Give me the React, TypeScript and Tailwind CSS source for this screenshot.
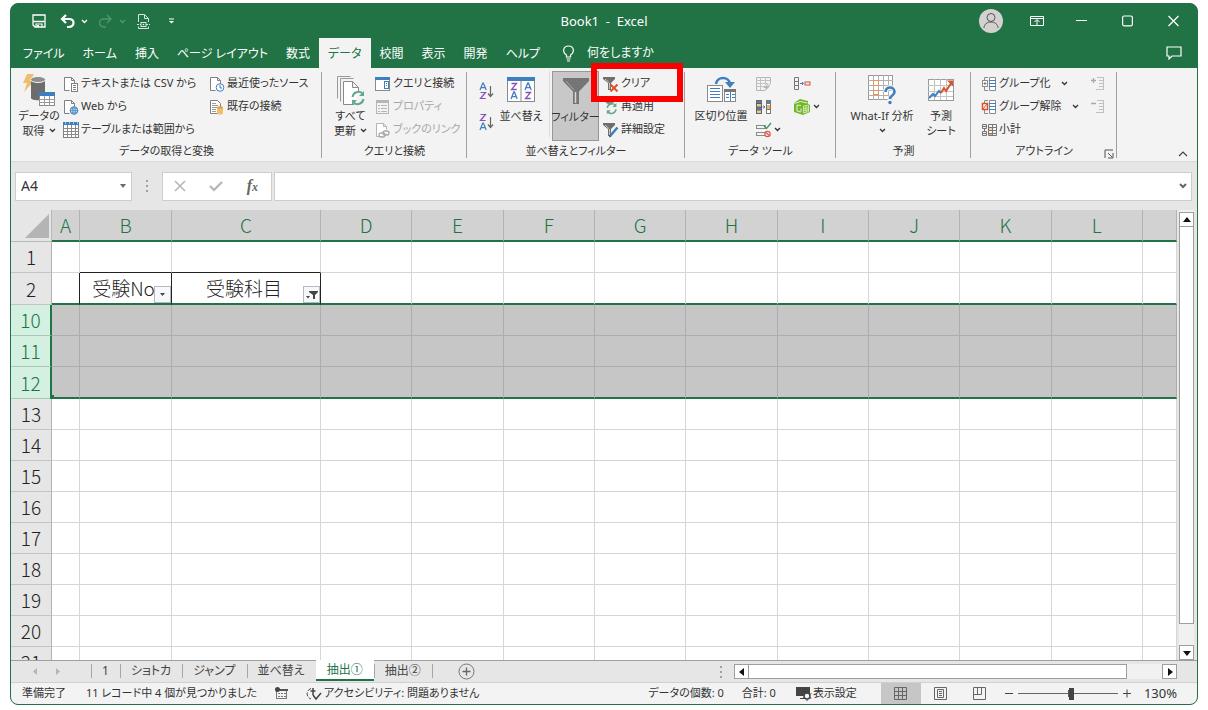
import type { ReactNode } from 'react';
import clsx from 'clsx';

const GREEN = '#217346';
const GRAY = '#6b6b6b';
const BLUE = '#3f7fbf';

const TABS = ['ファイル', 'ホーム', '挿入', 'ページ レイアウト', '数式', 'データ', '校閲', '表示', '開発', 'ヘルプ'];
const COLUMNS = ['A', 'B', 'C', 'D', 'E', 'F', 'G', 'H', 'I', 'J', 'K', 'L', ''];
const ROWS = [1, 2, 10, 11, 12, 13, 14, 15, 16, 17, 18, 19, 20, 21];
const SHEETS = ['1', 'ショトカ', 'ジャンプ', '並べ替え', '抽出①', '抽出②'];

interface SvgProps {
  w: number;
  h: number;
  children: ReactNode;
  className?: string;
}

function Svg({ w, h, children, className }: SvgProps) {
  return (
    <svg width={w} height={h} viewBox={`0 0 ${w} ${h}`} fill="none" className={clsx('shrink-0', className)} aria-hidden="true">
      {children}
    </svg>
  );
}

function Chevron({ color = '#333' }: { color?: string }) {
  return (
    <Svg w={7} h={5}>
      <path d="M1 1l2.500 2.500L6 1" stroke={color} strokeWidth="1.300" />
    </Svg>
  );
}

/* ---------- ribbon icons ---------- */

function DatabaseIcon() {
  return (
    <Svg w={34} h={34}>
      <path d="M5 1h7L8 8h4L2 19l3-9H1z" fill="#f0bd6a" />
      <path d="M9 6v19c0 3 14 3 14 0V6z" fill="#6d6d6d" />
      <ellipse cx="16" cy="6.500" rx="7.500" ry="3" fill="#8f8f8f" stroke="#f3f3f3" />
      <rect x="17.500" y="19.500" width="15" height="13" fill="#fff" stroke="#8a8a8a" />
      <rect x="17" y="19" width="16" height="4" fill={BLUE} />
      <path d="M22.500 23v10M27.500 23v10M17 26.500h16M17 29.500h16" stroke="#9a9a9a" />
    </Svg>
  );
}

function PageBase({ color = '#808080' }: { color?: string }) {
  return <path d="M6.500 14.500H1.500V1.500h7l3 3v3M8.500 1.500v3h3" fill="#fff" stroke={color} />;
}

function TextFileIcon() {
  return (
    <Svg w={16} h={16}>
      <PageBase />
      <rect x="8.500" y="7.500" width="6" height="8" fill="#fff" stroke="#808080" />
      <path d="M10 9.500h3M10 11.500h3M10 13.500h3" stroke="#808080" />
    </Svg>
  );
}

function WebFileIcon() {
  return (
    <Svg w={16} h={16}>
      <PageBase />
      <circle cx="11" cy="11.500" r="3.800" fill="#fff" stroke={BLUE} />
      <path d="M7 11.500h8M11 8v7M8 9.800h6M8 13.200h6" stroke={BLUE} strokeWidth=".7" />
      <ellipse cx="11" cy="11.500" rx="1.800" ry="3.800" stroke={BLUE} strokeWidth=".7" />
    </Svg>
  );
}

function TableIcon() {
  return (
    <Svg w={16} h={16}>
      <rect x=".5" y=".5" width="15" height="15" fill="#fff" stroke="#7d7d7d" />
      <path d="M4.500 3v13M8.500 3v13M12.500 3v13M0 6.500h16M0 9.500h16M0 12.500h16" stroke="#8a8a8a" />
      <path d="M0 0h16v3H0z" fill={BLUE} />
      <path d="M2 1h1M6 1h1M10 1h1M14 1h1" stroke="#fff" />
    </Svg>
  );
}

function RecentIcon() {
  return (
    <Svg w={16} h={16}>
      <PageBase />
      <circle cx="11" cy="11.500" r="3.800" fill="#fff" stroke={BLUE} />
      <path d="M11 9v3h2" stroke={BLUE} />
    </Svg>
  );
}

function ExistingIcon() {
  return (
    <Svg w={16} h={16}>
      <path d="M1.500 1.500h7l3 3v10h-10z" fill="#fff" stroke="#808080" />
      <path d="M3 4.500h4M3 6.500h6M3 8.500h5M3 10.500h4M3 12.500h4" stroke="#999" />
      <path d="M8 8.500v5.500c0 2 6 2 6 0V8.500z" fill="#f0bd6a" />
      <ellipse cx="11" cy="8.500" rx="3" ry="1.300" fill="#e0a33c" />
    </Svg>
  );
}

function RefreshArrows({ x, y, s }: { x: number; y: number; s: number }) {
  return (
    <g transform={`translate(${x} ${y}) scale(${s})`} stroke="#5fab8b" strokeWidth="2">
      <path d="M1.500 6a6 6 0 0 1 10-3.500M12.500 8a6 6 0 0 1-10 3.500" />
      <path d="M13 0v5H8zM1 14V9h5z" fill="#5fab8b" stroke="none" />
    </g>
  );
}

function RefreshAllIcon() {
  return (
    <Svg w={34} h={34}>
      <path d="M3.500 25.500v-22h13" stroke="#9a9a9a" />
      <path d="M6.500 28.500v-23h13" stroke="#9a9a9a" />
      <path d="M20 31.500H9.500v-23h9l6 6V18M18.500 8.500v6h6" fill="#fff" stroke="#8a8a8a" />
      <RefreshArrows x={17} y={18} s={1} />
    </Svg>
  );
}

function QueriesIcon() {
  return (
    <Svg w={16} h={16}>
      <rect x=".5" y="1.500" width="14" height="13" fill="#fff" stroke="#8a8a8a" />
      <path d="M0 1h15v3H0z" fill={BLUE} />
      <rect x="9.500" y="5.500" width="4" height="7" stroke={BLUE} />
      <path d="M11 7.500h1M11 9.500h1" stroke={BLUE} />
    </Svg>
  );
}

function PropertiesIcon() {
  return (
    <Svg w={16} h={16}>
      <rect x="1.500" y="1.500" width="12" height="13" stroke="#b5b5b5" />
      <path d="M1 3h13" stroke="#b5b5b5" strokeWidth="2" />
      <path d="M3 6.500h2M6 6.500h6M3 9.500h2M6 9.500h6M3 12.500h2M6 12.500h6" stroke="#b5b5b5" />
    </Svg>
  );
}

function LinksIcon() {
  return (
    <Svg w={16} h={16}>
      <PageBase color="#b5b5b5" />
      <rect x="4" y="11" width="6" height="4" rx="2" stroke="#a8a8a8" strokeWidth="1.300" />
      <rect x="8" y="9" width="6" height="4" rx="2" stroke="#a8a8a8" strokeWidth="1.300" />
    </Svg>
  );
}

const A_PATH = 'M0 7L2.800 0h.6L6.200 7M1.200 4.600h3.800';
const Z_PATH = 'M.5.5h5L.5 6.500h5.200';

function SortIcon({ desc = false }: { desc?: boolean }) {
  return (
    <Svg w={16} h={18}>
      <path d={A_PATH} transform={desc ? 'translate(1 10)' : 'translate(1 1)'} stroke={BLUE} strokeWidth="1.200" />
      <path d={Z_PATH} transform={desc ? 'translate(1 1)' : 'translate(1 10)'} stroke="#8b4fb8" strokeWidth="1.200" />
      <path d="M11.500 4v10M9 11.500l2.500 3 2.500-3" stroke="#666" strokeWidth="1.200" />
    </Svg>
  );
}

function SortDialogIcon() {
  return (
    <Svg w={30} h={28}>
      <rect x="1.500" y="1.500" width="27" height="24" fill="#fff" stroke="#8a8a8a" />
      <path d="M1 1h28v4H1z" fill={BLUE} />
      <path d="M15 5v21" stroke="#8a8a8a" />
      <g strokeWidth="1.300">
        <path d={Z_PATH} transform="translate(5 7)" stroke="#8b4fb8" />
        <path d={A_PATH} transform="translate(5 16)" stroke={BLUE} />
        <path d={A_PATH} transform="translate(19 7)" stroke={BLUE} />
        <path d={Z_PATH} transform="translate(19 16)" stroke="#8b4fb8" />
      </g>
    </Svg>
  );
}

function FilterIcon() {
  return (
    <Svg w={28} h={28}>
      <path d="M1 1h26v3L17 14.500V27h-6V14.500L1 4z" fill="#757575" />
      <path d="M13.500 15v11" stroke="#d8d8d8" strokeWidth="1.500" />
      <path d="M4 4l8 9" stroke="#a9a9a9" />
    </Svg>
  );
}

function SmallFunnel() {
  return (
    <>
      <path d="M0 1h12v2L8 7v7H5V7L0 3z" fill="#6f6f6f" />
      <path d="M6.500 7v6M2 3l4 3.500" stroke="#c8c8c8" />
    </>
  );
}

function ClearIcon() {
  return (
    <Svg w={16} h={16}>
      <SmallFunnel />
      <path d="M7.500 8.500l7 7M14.500 8.500l-7 7" stroke="#d9532c" strokeWidth="2" />
    </Svg>
  );
}

function ReapplyIcon() {
  return (
    <Svg w={16} h={16}>
      <path d="M2 1h9v2L8 6H6L2 3z" fill="#8a8a8a" />
      <RefreshArrows x={3} y={4} s={0.8} />
    </Svg>
  );
}

function AdvancedIcon() {
  return (
    <Svg w={16} h={16}>
      <SmallFunnel />
      <path d="M14.500 5.500l-7 8" stroke={BLUE} strokeWidth="2.500" />
      <path d="M6 15.500l.5-2.500 2 1.500z" fill="#444" />
    </Svg>
  );
}

function TextToColumnsIcon() {
  return (
    <Svg w={32} h={28}>
      <rect x="2.500" y="9.500" width="15" height="16" fill="#fff" stroke="#8a8a8a" />
      <path d="M5 12.500h10M5 15.500h10M5 18.500h10M5 21.500h10" stroke={BLUE} />
      <rect x="19.500" y="13.500" width="11" height="12" fill="#fff" stroke="#8a8a8a" />
      <path d="M19 13h12v3H19z" fill="#777" />
      <path d="M25.500 16v9M21 18.500h3M27 18.500h3M21 21.500h3M27 21.500h3" stroke={BLUE} />
      <path d="M11 8c1-8 13-8 14 0" stroke={BLUE} strokeWidth="2.500" />
      <path d="M20 6h10l-5 6z" fill={BLUE} />
    </Svg>
  );
}

function FlashFillIcon() {
  return (
    <Svg w={17} h={16}>
      <path d="M1.500 1.500h14v6l-6 7h-8z" stroke="#b5b5b5" />
      <path d="M1 4.500h14M1 7.500h12M1 10.500h10M5.500 1v13M10.500 1v8" stroke="#c2c2c2" />
      <path d="M14 7l-6 5h3l-1 3 5-5h-3z" fill="#b5b5b5" />
    </Svg>
  );
}

function DuplicatesIcon() {
  return (
    <Svg w={17} h={16}>
      <rect x="1.500" y="1.500" width="5" height="13" fill="#5a7ea8" stroke="#666" />
      <path d="M2 5h4v3H2zM2 11h4v3H2z" fill="#e8c98a" />
      <path d="M1 4.500h6M1 8h6M1 11h6" stroke="#555" strokeWidth=".8" />
      <rect x="11.500" y="1.500" width="4" height="13" fill="#fff" stroke="#777" />
      <path d="M12 2h3v3h-3z" fill="#5a7ea8" />
      <path d="M12 6h3v4h-3z" fill="#e8b25a" />
      <path d="M11 10.500h5" stroke="#777" />
      <path d="M7.500 8h2.500M8.500 6.500L10 8 8.500 9.500" stroke={BLUE} />
    </Svg>
  );
}

function ValidationIcon() {
  return (
    <Svg w={17} h={16}>
      <rect x="1.500" y="3.500" width="9" height="3" stroke="#8a8a8a" />
      <rect x="1.500" y="10.500" width="9" height="3" stroke="#8a8a8a" />
      <path d="M9 4l2.500 2.500L16 1" stroke="#3f9a6b" strokeWidth="1.400" />
      <circle cx="12.500" cy="12" r="2.700" fill="#f3f3f3" stroke="#dc5a4a" strokeWidth="1.200" />
      <path d="M10.800 10.500l3.500 3" stroke="#dc5a4a" strokeWidth="1.200" />
    </Svg>
  );
}

function ConsolidateIcon() {
  return (
    <Svg w={18} h={16}>
      <path d="M1.500 1.500h4v12h-4zM1.500 5.500h4M1.500 9.500h4" stroke="#777" />
      <path d="M7 7.500h3M9 6l1.500 1.500L9 9" stroke={BLUE} />
      <rect x="12" y="6" width="5" height="3" stroke="#d9532c" />
    </Svg>
  );
}

function DataModelIcon() {
  return (
    <Svg w={18} h={18}>
      <path d="M1 5l6-4 8 2v3l2 1v7l-7 3-9-3z" fill="#73b52d" />
      <path d="M1.500 5.500l6-2 7 1.500M8 7.500l-4-.5v6l4 1M8 10.500v3" stroke="#e3f3d0" />
      <path d="M10.500 8v7M10.500 8l5-.5v6l-5 1.500M10.500 10.500l5-.5M10.500 12.500l5-.5M13 8v6.500" stroke="#e3f3d0" strokeWidth=".8" />
    </Svg>
  );
}

function WhatIfIcon() {
  return (
    <Svg w={30} h={32}>
      <rect x="1.500" y="1.500" width="24" height="24" fill="#fff" stroke="#9a9a9a" />
      <path d="M6.500 1v25M11.500 1v25M16.500 1v25M21.500 1v25M1 6.500h25M1 11.500h25M1 16.500h25M1 21.500h25" stroke="#b0b0b0" />
      <path d="M6.500 6.500h5v5h-5zM6.500 16.500h5v4h-5z" stroke="#ee9350" />
      <path d="M18.500 18c0-6 9-6 9 0 0 4-4.500 3-4.500 8" stroke="#f3f3f3" strokeWidth="5" />
      <path d="M18.500 18c0-6 9-6 9 0 0 4-4.500 3-4.500 7" stroke={BLUE} strokeWidth="2.600" />
      <circle cx="23" cy="28.500" r="1.700" fill={BLUE} />
    </Svg>
  );
}

function ForecastIcon() {
  return (
    <Svg w={30} h={28}>
      <rect x="2.500" y="3.500" width="25" height="21" fill="#fff" stroke="#9a9a9a" />
      <path d="M8.500 3v21M14.500 3v21M20.500 3v21M2 9.500h25M2 15.500h25M2 20.500h25" stroke="#c4c4c4" />
      <path d="M3 22l4-4 2 2 4-5 2 2" stroke={BLUE} strokeWidth="2" />
      <path d="M15 17l3-5 2 3 6-9" stroke="#d9532c" strokeWidth="2" />
      <path d="M21 4.500h6v6z" fill="#d9532c" />
    </Svg>
  );
}

function GroupIcon({ variant }: { variant: 'group' | 'ungroup' | 'subtotal' }) {
  if (variant === 'subtotal') {
    return (
      <Svg w={16} h={16}>
        <path d="M1.500 2.500h4v4h-4zM1.500 9.500h4v4h-4zM3.500 6v3M2 4.500h3M2 11.500h3" stroke="#777" />
        <path d="M7.500 2.500h8v11h-8zM7 5.500h9M7 8.500h9M7 11.500h9M11.500 2v12" stroke="#777" />
        <path d="M8 7h3M8 12.500h3" stroke="#e8b25a" />
      </Svg>
    );
  }
  const red = variant === 'ungroup';
  return (
    <Svg w={16} h={16}>
      <path d="M3.500 4V1.500H7M3.500 11v3.500H7" stroke="#8a8a8a" />
      <rect x="1.500" y="4.500" width="5" height="6" fill="#fff" stroke={red ? '#d9532c' : '#8a8a8a'} strokeWidth={red ? 1.5 : 1} />
      <path d={red ? 'M2 10l4-5' : 'M2.500 7.500h3M4 6v3'} stroke={red ? '#d9532c' : '#777'} />
      <path d="M8.500 1.500h6v13h-6z" fill="#fff" stroke="#8a8a8a" />
      <path d="M8 4.500h7M8 7.500h7M8 10.500h7" stroke={BLUE} />
    </Svg>
  );
}

function DetailIcon({ minus = false }: { minus?: boolean }) {
  return (
    <Svg w={16} h={16}>
      <path d={minus ? 'M1 4.500h5' : 'M1 4.500h5M3.500 2v5'} stroke="#a8a8a8" strokeWidth="1.300" />
      <path d="M7 1.500h7M9 4.500h5M9 7.500h5M9 10.500h5M6 13.500h8M13.500 1v12" stroke="#c0c0c0" />
    </Svg>
  );
}

/* ---------- ribbon building blocks ---------- */

interface GroupProps {
  label: string;
  className: string;
  children: ReactNode;
  launcher?: boolean;
}

function Group({ label, className, children, launcher }: GroupProps) {
  return (
    <section className={clsx('relative flex shrink-0 flex-col pt-[2px]', className)}>
      <div className="flex h-[74px]">{children}</div>
      <div className="text-center leading-5">{label}</div>
      {launcher && (
        <button className="absolute right-[3px] bottom-[2px]" aria-label={label}>
          <Svg w={10} h={10}>
            <path d="M1 9V1h8M4 4l4 4M9 4v5H4" stroke="#555" />
          </Svg>
        </button>
      )}
      <div className="absolute top-[3px] right-0 h-[86px] w-px bg-[#a0a0a0]" />
    </section>
  );
}

function Stack({ className, children }: { className?: string; children: ReactNode }) {
  return <div className={clsx('flex flex-col pt-px', className)}>{children}</div>;
}

interface SmallButtonProps {
  icon: ReactNode;
  label?: string;
  disabled?: boolean;
  menu?: boolean;
}

function SmallButton({ icon, label, disabled, menu }: SmallButtonProps) {
  return (
    <button disabled={disabled} className="flex h-[23px] items-center gap-[2px] whitespace-nowrap disabled:text-[#a8a8a8]">
      {icon}
      {label}
      {menu && (
        <span className={label ? 'pl-2' : ''}>
          <Chevron />
        </span>
      )}
    </button>
  );
}

interface BigButtonProps {
  icon: ReactNode;
  lines: string[];
  className?: string;
  menu?: boolean;
}

function BigButton({ icon, lines, className, menu }: BigButtonProps) {
  return (
    <button className={clsx('flex h-[70px] flex-col items-center pt-px leading-[15px] whitespace-nowrap', className)}>
      <span className="flex h-9 items-center justify-center">{icon}</span>
      {lines.map((line, i) => (
        <span key={i} className="flex min-h-[15px] items-center gap-1">
          {line}
          {menu && i === lines.length - 1 && <Chevron />}
        </span>
      ))}
    </button>
  );
}

function TitleBar() {
  return (
    <header className="relative flex h-[34px] items-center justify-between text-white">
      <div className="flex items-center pl-[21px]">
        <button aria-label="上書き保存">
          <Svg w={14} h={14}>
            <path d="M1 1h12v12H3l-2-2z" stroke="#fff" strokeWidth="1.300" />
            <path d="M1.500 7.500h11" stroke="#fff" strokeWidth="1.300" />
            <path d="M4 13v-3h6v3" stroke="#fff" strokeWidth="1.200" />
            <path d="M5 11h2v2H5z" fill="#fff" />
          </Svg>
        </button>
        <button className="ml-[14px] flex items-center gap-[6px]" aria-label="元に戻す">
          <Svg w={15} h={14}>
            <path d="M6 1L2 5l4 4M2 5h7c6 0 6 7 0 8H7" stroke="#fff" strokeWidth="2.200" />
          </Svg>
          <Chevron color="#fff" />
        </button>
        <button disabled className="ml-[10px] flex items-center gap-[6px]" aria-label="やり直し">
          <Svg w={15} h={14}>
            <path d="M9 1l4 4-4 4M13 5H6C0 5 0 12 6 13h2" stroke="#4f9670" strokeWidth="1.300" />
          </Svg>
          <Chevron color="#4f9670" />
        </button>
        <button className="ml-[11px]" aria-label="印刷プレビュー">
          <Svg w={13} h={16}>
            <path d="M1.500 9V1.500h6l4 4V9M7.500 1.500v4h4M1.500 13.500v2h10v-2" stroke="#d5e6dc" />
            <path d="M0 11.500h13" stroke="#d5e6dc" strokeDasharray="2 1" />
            <rect x="4" y="9.500" width="5" height="4" fill={GREEN} stroke="#d5e6dc" />
            <circle cx="6.500" cy="11.500" r=".8" fill="#fff" />
          </Svg>
        </button>
        <button className="ml-[18px]" aria-label="カスタマイズ">
          <Svg w={7} h={6}>
            <path d="M1 1h5" stroke="#fff" />
            <path d="M1 3h5L3.500 5.500z" fill="#fff" />
          </Svg>
        </button>
      </div>
      <div className="absolute inset-x-0 top-[7px] text-center text-[13px] leading-5 whitespace-pre">Book1  -  Excel</div>
      <div className="flex items-center pr-[18px]">
        <button className="mr-[27px]" aria-label="アカウント">
          <Svg w={24} h={24}>
            <circle cx="12" cy="12" r="12" fill="#d4d2d0" />
            <circle cx="12" cy="8.500" r="4" stroke="#555" />
            <path d="M5 19c0-8 14-8 14 0" stroke="#555" />
          </Svg>
        </button>
        <button className="mr-[32px]" aria-label="リボンの表示オプション">
          <Svg w={14} h={12}>
            <path d="M.5 1.500h13v9H.5zM.5 3.500h13M7 10V5M4.500 7L7 4.500 9.500 7" stroke="#fff" />
          </Svg>
        </button>
        <button className="mr-[35px]" aria-label="最小化">
          <Svg w={11} h={12}>
            <path d="M0 5.500h11" stroke="#fff" />
          </Svg>
        </button>
        <button className="mr-[35px]" aria-label="最大化">
          <Svg w={11} h={12}>
            <rect x=".6" y="1" width="9.800" height="9.800" rx="1.500" stroke="#fff" strokeWidth="1.200" />
          </Svg>
        </button>
        <button aria-label="閉じる">
          <Svg w={11} h={12}>
            <path d="M.5 1l10 10M10.500 1l-10 10" stroke="#fff" strokeWidth="1.200" />
          </Svg>
        </button>
      </div>
    </header>
  );
}

function TabBar() {
  return (
    <nav className="flex h-[30px] text-white">
      <div className="flex pl-[3px]">
        {TABS.map((tab) => (
          <button
            key={tab}
            className={clsx('px-[9px] pt-px leading-[29px] whitespace-nowrap', tab === 'データ' && 'bg-[#f3f3f3] text-[#217346]')}
          >
            {tab}
          </button>
        ))}
      </div>
      <button className="ml-[13px] flex items-center gap-[12px] whitespace-nowrap">
        <Svg w={13} h={17}>
          <path d="M4.500 12v-2C0 7 1 1 6.500 1S13 7 8.500 10v2zM4.500 14h4M5 16h3" stroke="#fff" strokeWidth="1.200" />
        </Svg>
        何をしますか
      </button>
      <button className="mr-[15px] ml-auto" aria-label="コメント">
        <Svg w={16} h={14}>
          <path d="M1 1h14v9H6l-3 3v-3H1z" stroke="#fff" strokeWidth="1.200" />
        </Svg>
      </button>
    </nav>
  );
}

function Ribbon() {
  return (
    <div className="flex h-[93px] bg-[#f3f3f3] pt-px text-[11px] text-[#333]">
      <Group label="データの取得と変換" className="w-[311px]">
        <BigButton icon={<DatabaseIcon />} lines={['データの', '取得']} menu className="w-[52px] pl-1" />
        <Stack className="w-[146px]">
          <SmallButton icon={<TextFileIcon />} label="テキストまたは CSV から" />
          <SmallButton icon={<WebFileIcon />} label="Web から" />
          <SmallButton icon={<TableIcon />} label="テーブルまたは範囲から" />
        </Stack>
        <Stack>
          <SmallButton icon={<RecentIcon />} label="最近使ったソース" />
          <SmallButton icon={<ExistingIcon />} label="既存の接続" />
        </Stack>
      </Group>
      <Group label="クエリと接続" className="w-[145px]">
        <BigButton icon={<RefreshAllIcon />} lines={['すべて', '更新']} menu className="w-[53px] pl-1" />
        <Stack>
          <SmallButton icon={<QueriesIcon />} label="クエリと接続" />
          <SmallButton icon={<PropertiesIcon />} label="プロパティ" disabled />
          <SmallButton icon={<LinksIcon />} label="ブックのリンク" disabled />
        </Stack>
      </Group>
      <Group label="並べ替えとフィルター" className="w-[218px]">
        <div className="flex w-[28px] flex-col items-end gap-[13px] pt-[11px]">
          <button aria-label="昇順">
            <SortIcon />
          </button>
          <button aria-label="降順">
            <SortIcon desc />
          </button>
        </div>
        <BigButton icon={<SortDialogIcon />} lines={['並べ替え']} className="w-[52px]" />
        <div className="mx-[2px] h-[66px] w-px bg-[#dcdcdc]" />
        <BigButton icon={<FilterIcon />} lines={['フィルター']} className="w-[47px] border border-[#979797] bg-[#c8c8c8]" />
        <Stack className="ml-1">
          <div className="relative">
            <SmallButton icon={<ClearIcon />} label="クリア" />
            <div className="pointer-events-none absolute -top-[9px] -left-3 z-10 h-[39px] w-[92px] border-[6px] border-[#fb0000]" />
          </div>
          <SmallButton icon={<ReapplyIcon />} label="再適用" />
          <SmallButton icon={<AdvancedIcon />} label="詳細設定" />
        </Stack>
      </Group>
      <Group label="データ ツール" className="w-[151px]">
        <BigButton icon={<TextToColumnsIcon />} lines={['区切り位置']} className="w-[70px] pl-[2px]" />
        <Stack className="w-[38px]">
          <SmallButton icon={<FlashFillIcon />} disabled />
          <SmallButton icon={<DuplicatesIcon />} />
          <SmallButton icon={<ValidationIcon />} menu />
        </Stack>
        <Stack>
          <SmallButton icon={<ConsolidateIcon />} />
          <SmallButton icon={<DataModelIcon />} menu />
        </Stack>
      </Group>
      <Group label="予測" className="w-[135px]">
        <BigButton icon={<WhatIfIcon />} lines={['What-If 分析', '']} menu className="w-[90px] pl-[2px]" />
        <BigButton icon={<ForecastIcon />} lines={['予測', 'シート']} className="w-[30px]" />
      </Group>
      <Group label="アウトライン" className="w-[146px]" launcher>
        <Stack className="w-[109px] pl-[10px]">
          <SmallButton icon={<GroupIcon variant="group" />} label="グループ化" menu />
          <SmallButton icon={<GroupIcon variant="ungroup" />} label="グループ解除" menu />
          <SmallButton icon={<GroupIcon variant="subtotal" />} label="小計" />
        </Stack>
        <Stack className="ml-[10px]">
          <SmallButton icon={<DetailIcon />} disabled />
          <SmallButton icon={<DetailIcon minus />} disabled />
        </Stack>
      </Group>
      <button className="mr-[9px] mb-1 ml-auto self-end" aria-label="リボンを折りたたむ">
        <Svg w={10} h={6}>
          <path d="M1 5l4-4 4 4" stroke="#444" strokeWidth="1.200" />
        </Svg>
      </button>
    </div>
  );
}

function Dots({ className }: { className?: string }) {
  return (
    <Svg w={2} h={12} className={className}>
      <path d="M0 1h2M0 6h2M0 11h2" stroke="#a0a0a0" strokeWidth="2" />
    </Svg>
  );
}

function FormulaBar() {
  return (
    <div className="flex h-[49px] items-center border-t border-[#dadada] bg-[#e6e6e6] pr-[5px] pl-1">
      <div className="flex h-[29px] w-[117px] items-center border border-[#cdcdcd] bg-white pr-[5px]">
        <input aria-label="名前ボックス" defaultValue="A4" className="w-full min-w-0 bg-transparent px-[5px] text-sm text-[#333] outline-none" />
        <button aria-label="名前の一覧">
          <Svg w={7} h={4}>
            <path d="M1 0h6L4 4z" fill={GRAY} />
          </Svg>
        </button>
      </div>
      <Dots className="mx-[14px]" />
      <div className="flex h-[29px] w-[110px] items-center justify-between border border-[#cdcdcd] bg-white pr-[13px] pl-[11px]">
        <button aria-label="キャンセル">
          <Svg w={12} h={12}>
            <path d="M1 1l10 10M11 1L1 11" stroke="#b5b5b5" strokeWidth="1.500" />
          </Svg>
        </button>
        <button aria-label="入力">
          <Svg w={14} h={12}>
            <path d="M1 6l4 4 8-8" stroke="#b5b5b5" strokeWidth="2.200" />
          </Svg>
        </button>
        <button className="font-['Liberation_Serif',serif] text-base leading-5 font-bold text-[#666] italic">
          f<span className="text-xs">x</span>
        </button>
      </div>
      <div className="ml-[2px] flex h-[29px] flex-1 items-center border border-[#cdcdcd] bg-white pr-1">
        <input aria-label="数式バー" className="w-full min-w-0 bg-transparent px-2 text-sm outline-none" />
        <button aria-label="数式バーの展開">
          <Svg w={8} h={6}>
            <path d="M1 1l3 3 3-3" stroke="#666" strokeWidth="2" />
          </Svg>
        </button>
      </div>
    </div>
  );
}

function FilterToggle({ active = false }: { active?: boolean }) {
  return (
    <button
      aria-label="フィルター"
      className="absolute right-0 bottom-0 flex h-[17px] w-[17px] items-center justify-center border border-[#b4bac4] bg-[#f7f8fb]"
    >
      {active ? (
        <Svg w={12} h={10}>
          <path d="M3 1h9v1L9 5v4H7V5L3 2z" fill="#444" />
          <path d="M0 6h4L2 8.500z" fill="#444" />
        </Svg>
      ) : (
        <Svg w={5} h={3}>
          <path d="M0 0h5L2.500 3z" fill="#444" />
        </Svg>
      )}
    </button>
  );
}

function Cell({ row, col }: { row: number; col: string }) {
  const selected = row >= 10 && row <= 12;
  const boxed = col === 'B' || col === 'C';
  const header = row === 2 && boxed;

  return (
    <td
      className={clsx(
        'relative border-r border-b py-0 pl-0 text-center',
        header ? 'pr-1' : 'pr-0',
        selected ? 'bg-[#c6c6c6]' : 'bg-white',
        selected ? 'border-r-[#adadad]' : row === 2 && (boxed || col === 'A') ? 'border-r-[#222]' : 'border-r-[#d6d6d6]',
        row === 2 || row === 12
          ? 'border-b-2 border-b-[#217346]'
          : row === 1 && boxed
            ? 'border-b-[#222]'
            : selected
              ? 'border-b-[#adadad]'
              : 'border-b-[#d6d6d6]'
      )}
    >
      {header && (col === 'B' ? '受験No' : '受験科目')}
      {header && <FilterToggle active={col === 'C'} />}
      {row === 12 && col === 'A' && <span className="absolute -bottom-[2px] -left-[2px] size-1 bg-[#217346]" />}
    </td>
  );
}

function Grid() {
  return (
    <div className="min-w-0 flex-1 overflow-hidden">
      <table className="w-full table-fixed border-separate border-spacing-0 font-['Noto_Sans_CJK_JP',sans-serif] text-[19px] leading-6 font-light text-[#222]">
        <colgroup>
          <col className="w-[41px]" />
          <col className="w-[28px]" />
          <col className="w-[92px]" />
          <col className="w-[149px]" />
          {COLUMNS.slice(3, 12).map((c) => (
            <col key={c} />
          ))}
          <col className="w-[34px]" />
        </colgroup>
        <thead>
          <tr className="h-8">
            <th className="border-r border-b border-[#b8b8b8] bg-[#e6e6e6] p-0">
              <Svg w={26} h={26} className="ml-auto">
                <path d="M24 1v24H0z" fill="#b4b4b4" />
              </Svg>
            </th>
            {COLUMNS.map((c, i) => (
              <th key={i} className="border-r border-b-2 border-r-[#b2b2b2] border-b-[#217346] bg-[#d2d2d2] p-0 font-light text-[#217346]">
                {c}
              </th>
            ))}
          </tr>
        </thead>
        <tbody>
          {ROWS.map((row) => {
            const selected = row >= 10 && row <= 12;
            return (
              <tr key={row} className={row === 2 || row === 12 ? 'h-8' : 'h-[31px]'}>
                <th
                  className={clsx(
                    'border-b p-0 font-light',
                    selected
                      ? 'border-r-2 border-r-[#217346] border-b-[#a9c9b8] bg-[#d3f0e0] text-[#217346]'
                      : 'border-r border-r-[#b2b2b2] border-b-[#c4c4c4] bg-[#e6e6e6]'
                  )}
                >
                  {row}
                </th>
                {COLUMNS.map((c, i) => (
                  <Cell key={i} row={row} col={c} />
                ))}
              </tr>
            );
          })}
        </tbody>
      </table>
    </div>
  );
}

const ARROWS = {
  up: 'M0 6h8L4 1z',
  down: 'M0 2h8L4 7z',
  left: 'M6 0v8L1 4z',
  right: 'M2 0v8l5-4z',
};

function ScrollButton({ dir }: { dir: keyof typeof ARROWS }) {
  return (
    <button aria-label={dir} className="flex size-[15px] shrink-0 items-center justify-center border border-[#9e9e9e] bg-white">
      <Svg w={8} h={8}>
        <path d={ARROWS[dir]} fill="#111" />
      </Svg>
    </button>
  );
}

function SheetBar() {
  return (
    <div className="flex h-[22px] bg-[#e6e6e6] text-[#444]">
      <div className="flex min-w-0 flex-1 border-t border-[#9e9e9e]">
        <div className="flex w-[80px] items-center gap-[19px] pl-[22px]">
          <Svg w={4} h={7}>
            <path d="M4 0v7L0 3.500z" fill="#b5b5b5" />
          </Svg>
          <Svg w={4} h={7}>
            <path d="M0 0v7l4-3.500z" fill="#b5b5b5" />
          </Svg>
        </div>
        {SHEETS.map((s) => (
          <button
            key={s}
            className={clsx(
              'relative px-[11px] leading-[17px] whitespace-nowrap',
              s === '抽出①'
                ? '-mt-px h-[21px] border-b-2 border-[#217346] bg-white text-[#217346]'
                : 'pb-[2px] before:absolute before:top-[3px] before:left-0 before:h-[14px] before:w-px before:bg-[#a6a6a6]'
            )}
          >
            {s}
          </button>
        ))}
        <div className="mt-[3px] h-[14px] w-px bg-[#a6a6a6]" />
        <button className="ml-[25px]" aria-label="新しいシート">
          <Svg w={17} h={17}>
            <circle cx="8.500" cy="8.500" r="7.500" stroke="#777" />
            <path d="M4.500 8.500h8M8.500 4.500v8" stroke="#666" strokeWidth="1.300" />
          </Svg>
        </button>
      </div>
      <div className="flex w-[495px] items-center border-t border-[#9e9e9e] pl-[18px]">
        <Dots className="mr-[12px]" />
        <div className="mr-5 flex flex-1 bg-[#f1f1f1]">
          <ScrollButton dir="left" />
          <div className="h-[15px] flex-1 border border-l-0 border-[#9e9e9e] bg-white" />
          <div className="w-[35px]" />
          <ScrollButton dir="right" />
        </div>
      </div>
    </div>
  );
}

function StatusBar() {
  return (
    <footer className="flex h-[22px] items-center border-t border-[#d0d0d0] bg-[#f3f3f3] pl-[11px] text-[11px] whitespace-nowrap text-[#333]">
      <span>準備完了</span>
      <span className="ml-5">11 レコード中 4 個が見つかりました</span>
      <Svg w={13} h={13} className="ml-[18px]">
        <rect x="1.500" y="2.500" width="10" height="9" stroke="#777" />
        <path d="M5 3h8" stroke="#555" strokeWidth="2" />
        <path d="M3 6.500h8M3 9.500h8" stroke="#777" strokeDasharray="2 1" />
        <circle cx="2.500" cy="2.500" r="2.500" fill="#444" />
      </Svg>
      <button className="ml-[18px] flex items-center gap-[2px]">
        <Svg w={16} h={14}>
          <path d="M5 1.500A5.500 5.500 0 0 0 5 12" stroke="#444" strokeDasharray="4 1.500" />
          <path d="M7 1v7M4.500 4h5M7 8l3 4 5-6" stroke="#444" strokeWidth="1.500" />
        </Svg>
        アクセシビリティ: 問題ありません
      </button>
      <div className="ml-auto flex items-center">
        <span>データの個数: 0</span>
        <span className="ml-[18px]">合計: 0</span>
        <button className="ml-5 flex items-center gap-px">
          <Svg w={16} h={15}>
            <path d="M0 1h14v9H0zM4 12h5v1H4z" fill="#444" />
            <circle cx="11" cy="10" r="3" fill="#f3f3f3" stroke="#444" strokeWidth="1.500" />
            <path d="M11 5v10M6.500 7.500l9 5M15.500 7.500l-9 5" stroke="#444" strokeDasharray="1.500 7" />
          </Svg>
          表示設定
        </button>
        <button className="ml-6 flex h-[21px] w-10 items-center justify-center bg-[#c6c6c6]" aria-label="標準">
          <Svg w={13} h={13}>
            <path d="M.5.5h12v12H.5zM4.500 0v13M8.500 0v13M0 4.500h13M0 8.500h13" stroke="#666" />
          </Svg>
        </button>
        <button className="flex w-10 justify-center" aria-label="ページ レイアウト">
          <Svg w={13} h={13}>
            <path d="M.5.5h12v12H.5zM3.500 2.500h6v8h-6zM5 4.500h3M5 6.500h3M5 8.500h3" stroke="#666" />
          </Svg>
        </button>
        <button className="flex w-[38px] justify-center" aria-label="改ページ プレビュー">
          <Svg w={13} h={13}>
            <path d="M.5.5h12v12H.5zM4.500 0v7.500M8.500 0v7.500M.5 7.500h8" stroke="#666" />
          </Svg>
        </button>
        <button className="ml-[6px]" aria-label="縮小">
          <Svg w={8} h={9}>
            <path d="M0 4.500h8" stroke="#444" />
          </Svg>
        </button>
        <div className="relative mx-[5px] flex items-center">
          <input
            type="range"
            aria-label="ズーム"
            min={0}
            max={240}
            defaultValue={130}
            className="h-3 w-[100px] appearance-none bg-[linear-gradient(#666,#666)] bg-[length:100%_1px] bg-center bg-no-repeat [&::-webkit-slider-thumb]:h-3 [&::-webkit-slider-thumb]:w-[5px] [&::-webkit-slider-thumb]:appearance-none [&::-webkit-slider-thumb]:bg-[#444]"
          />
          <span className="pointer-events-none absolute left-1/2 h-[7px] w-px bg-[#555]" />
        </div>
        <button aria-label="拡大">
          <Svg w={8} h={9}>
            <path d="M0 4.500h8M4 .5v8" stroke="#444" />
          </Svg>
        </button>
        <button className="mr-5 ml-[13px] text-[13px]">130%</button>
      </div>
    </footer>
  );
}

export default function App() {
  return (
    <div className="h-screen bg-white px-[10px] pt-[3px] pb-[5px] font-['Noto_Sans','Noto_Sans_CJK_JP',sans-serif] text-xs [font-feature-settings:'palt']">
      <div className="flex h-full flex-col overflow-hidden rounded-lg border border-[#217346] bg-[#217346]">
        <TitleBar />
        <TabBar />
        <Ribbon />
        <FormulaBar />
        <main className="flex min-h-0 flex-1 bg-[#e6e6e6]">
          <Grid />
          <div className="mr-[3px] ml-[2px] flex w-[15px] flex-col bg-[#f1f1f1] pt-[2px]">
            <ScrollButton dir="up" />
            <div className="flex-1 border border-t-0 border-[#9e9e9e] bg-white" />
            <div className="h-[21px]" />
            <ScrollButton dir="down" />
          </div>
        </main>
        <SheetBar />
        <StatusBar />
      </div>
    </div>
  );
}
